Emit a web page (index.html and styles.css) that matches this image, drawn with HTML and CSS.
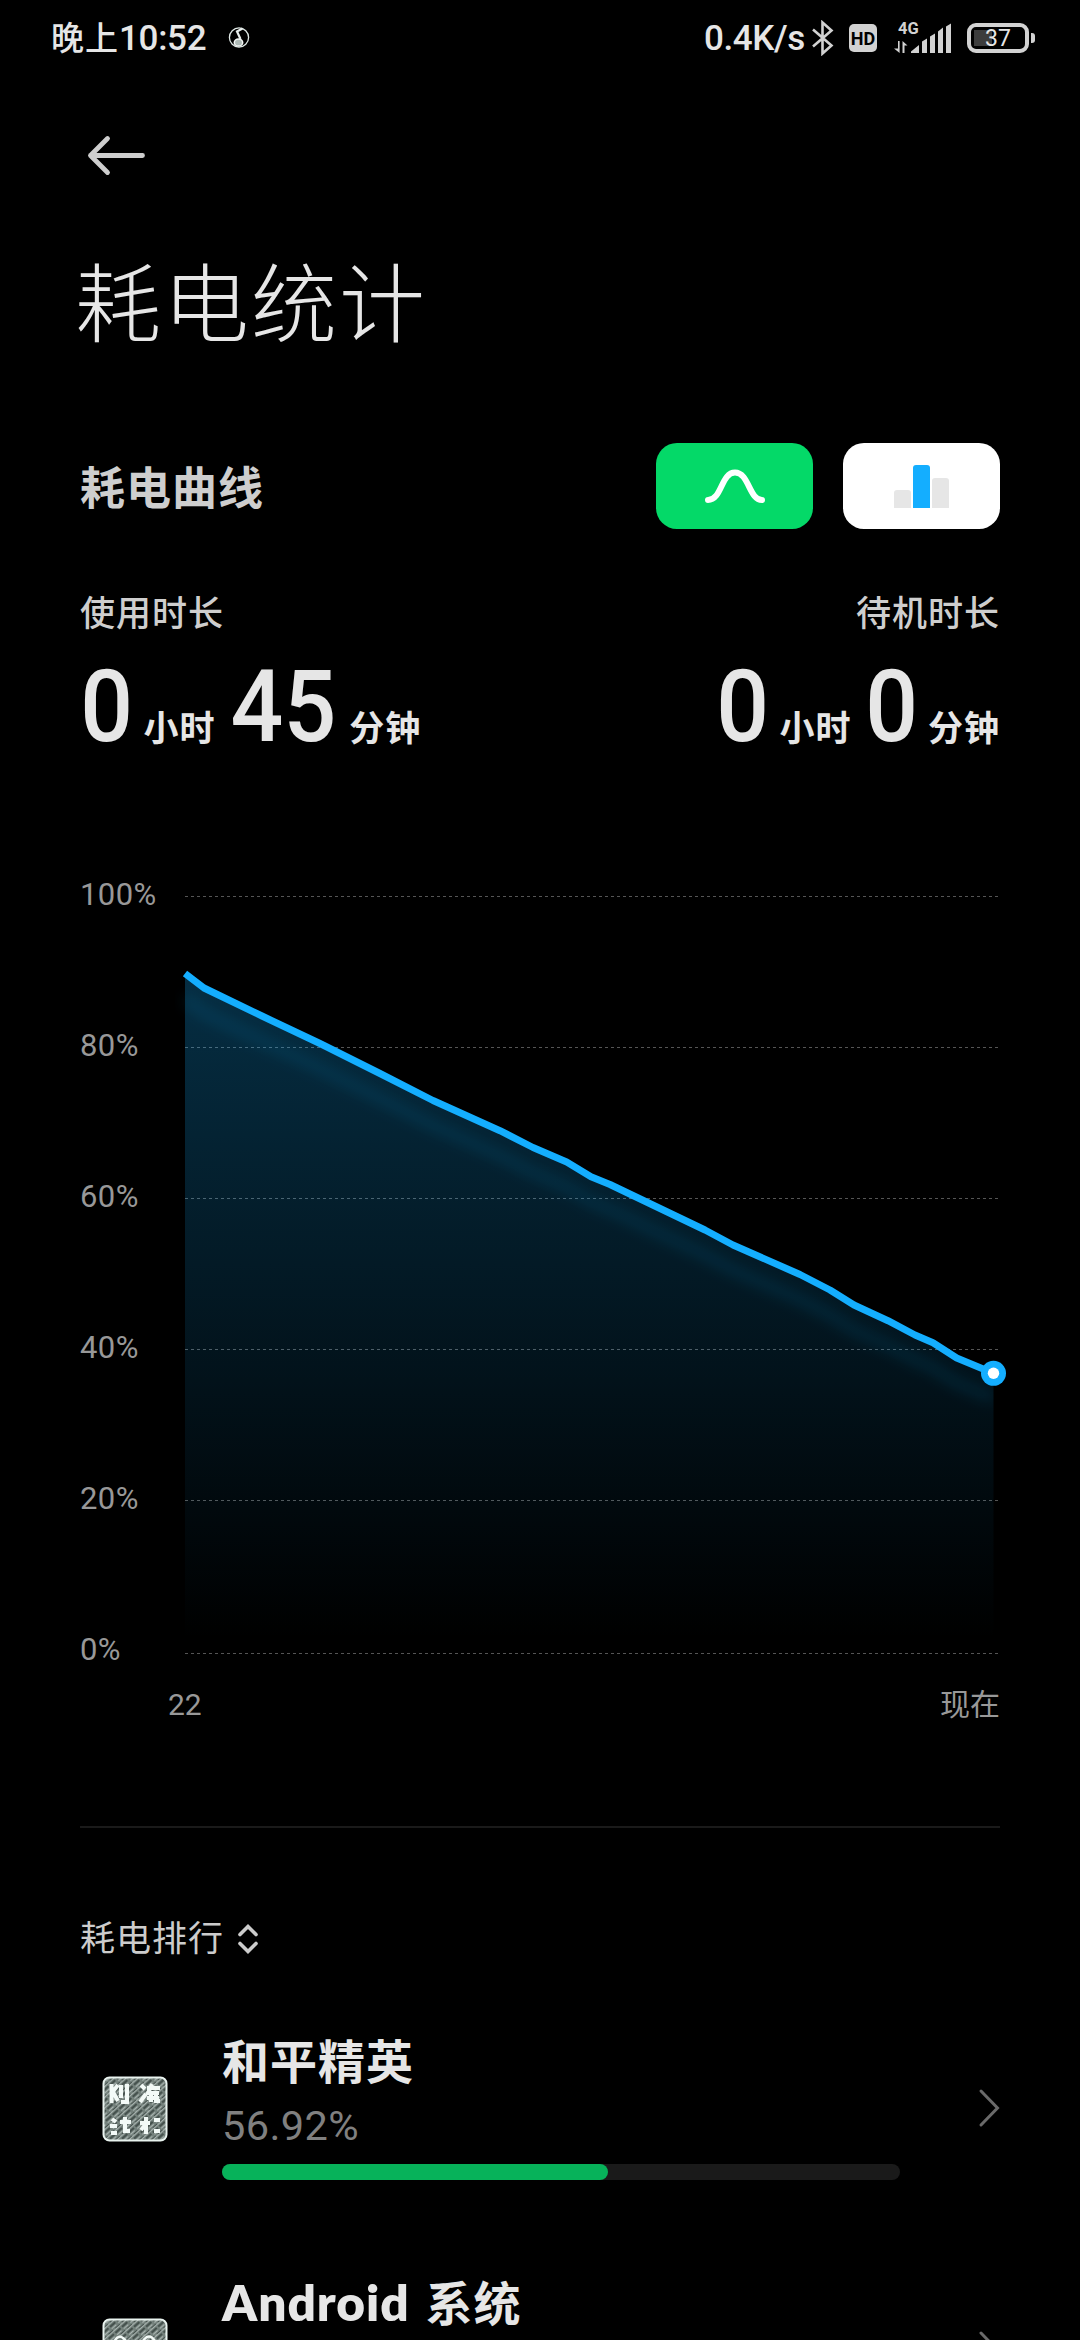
FILE: index.html
```html
<!DOCTYPE html>
<html lang="zh-CN">
<head>
<meta charset="utf-8">
<title>耗电统计</title>
<link rel="stylesheet" href="styles.css">
</head>
<body>
<header class="status">
  <div class="status-left">
    <span class="clock"><span class="clock-cn">晚上</span>10:52</span>
    <svg class="music" width="22" height="24" viewBox="0 0 22 24" fill="none">
      <circle cx="11" cy="11.500" r="9.600" stroke="#dfe8e5" stroke-width="1.300"/>
      <path d="M12.500 13 9 5.500 14.500 2.500" stroke="#e8eeec" stroke-width="2.200"/>
      <ellipse cx="10.500" cy="16.500" rx="4.200" ry="3.600" fill="#aebab6" stroke="#f4f8f6" stroke-width="1.500"/>
    </svg>
  </div>
  <div class="status-right">
    <span class="speed">0.4K/s</span>
    <svg class="bt" width="22" height="36" viewBox="0 0 22 36" fill="none" stroke="#d2d2d2" stroke-width="2.600" stroke-linejoin="miter">
      <path d="M1 9.500 19.500 25.500 10.500 33.500V2.500L19.500 10.500 1 26.500"/>
    </svg>
    <span class="hd">HD</span>
    <svg class="signal" width="58" height="38" viewBox="0 -4 58 38" fill="#d2d2d2">
      <text x="4" y="12.500" class="net">4G</text>
      <path d="M4 20h1.600v12L0 27.500h4zM8.500 32V20l5 4.500h-3V32z"/>
      <path d="M17 32v-1.500l8-6.500v8zM28 32V20.500l5-3V32zM36 32V15.500l5-3V32zM44 32V10.500l5-4V32zM52 32V5.500l5-3V32z"/>
    </svg>
    <span class="battery"><span class="battery-text">37</span></span>
    <span class="nub"></span>
  </div>
</header>

<nav class="appbar">
  <svg width="60" height="42" viewBox="0 0 60 42" fill="none" stroke="#cecece" stroke-width="4.800" stroke-linecap="round" stroke-linejoin="round">
    <path d="M56.500 20.500H4.500M21.500 3.500l-17 17 17 17"/>
  </svg>
</nav>
<h1 class="title">耗电统计</h1>

<main class="content">
  <section class="curve-head">
    <h2>耗电曲线</h2>
    <div class="toggles">
      <button class="toggle toggle-on">
        <svg width="157" height="86" viewBox="0 0 157 86" fill="none" stroke="#fff" stroke-width="6" stroke-linecap="round"><path d="M52 57C66 57 65 29.500 79 29.500S93 57 106 57"/></svg>
      </button>
      <button class="toggle">
        <svg width="157" height="86" viewBox="0 0 157 86"><path fill="#e6e6e6" d="M51 65V50q0-3 3-3h11q3 0 3 3v15zM89 65V38q0-3 3-3h11q3 0 3 3v27z"/><path fill="#14aeff" d="M70 65V25q0-3 3-3h11q3 0 3 3v40z"/></svg>
      </button>
    </div>
  </section>

  <section class="durations">
    <div class="duration">
      <div class="duration-label">使用时长</div>
      <div class="duration-value"><b>0</b><i>小时</i><b>45</b><i>分钟</i></div>
    </div>
    <div class="duration duration-end">
      <div class="duration-label">待机时长</div>
      <div class="duration-value"><b>0</b><i>小时</i><b>0</b><i>分钟</i></div>
    </div>
  </section>

  <section class="chart">
    <div class="y-axis"><span>100%</span><span>80%</span><span>60%</span><span>40%</span><span>20%</span><span>0%</span></div>
    <svg class="plot" width="815" height="800" viewBox="185 872 815 800" fill="none">
      <defs>
        <linearGradient id="area" gradientUnits="userSpaceOnUse" x1="0" y1="973" x2="0" y2="1640">
          <stop offset="0" stop-color="#14aeff" stop-opacity=".265"/>
          <stop offset="1" stop-color="#14aeff" stop-opacity="0"/>
        </linearGradient>
        <filter id="soft" filterUnits="userSpaceOnUse" x="150" y="940" width="900" height="520"><feGaussianBlur stdDeviation="7"/></filter>
        <clipPath id="under"><path d="M175 973.500H185L204 988 262 1016 320 1043.500 379 1073 433 1100.500 500 1130.700 533 1147.500 566.700 1162 591 1176.700 610 1184.500 705 1230 733 1245 800 1274.500 830 1290 854 1305 888 1320.700 915 1335 933 1342.700 956.700 1358 993.500 1373.300V1653H175z"/></clipPath>
      </defs>
      <path stroke="#555" stroke-dasharray="3 3" d="M185 896.500H998.500M185 1047.500H998.500M185 1198.500H998.500M185 1349.500H998.500M185 1500.500H998.500M185 1653.500H998.500"/>
      <path fill="url(#area)" d="M185 973.500 204 988 262 1016 320 1043.500 379 1073 433 1100.500 500 1130.700 533 1147.500 566.700 1162 591 1176.700 610 1184.500 705 1230 733 1245 800 1274.500 830 1290 854 1305 888 1320.700 915 1335 933 1342.700 956.700 1358 993.500 1373.300V1653H185z"/>
      <g clip-path="url(#under)">
        <path filter="url(#soft)" stroke="#14aeff" stroke-opacity=".13" stroke-width="9" transform="translate(0 25)" d="M185 973.500 204 988 262 1016 320 1043.500 379 1073 433 1100.500 500 1130.700 533 1147.500 566.700 1162 591 1176.700 610 1184.500 705 1230 733 1245 800 1274.500 830 1290 854 1305 888 1320.700 915 1335 933 1342.700 956.700 1358 993.500 1373.300"/>
      </g>
      <path stroke="#14aeff" stroke-width="7" stroke-linejoin="round" d="M185 973.500 204 988 262 1016 320 1043.500 379 1073 433 1100.500 500 1130.700 533 1147.500 566.700 1162 591 1176.700 610 1184.500 705 1230 733 1245 800 1274.500 830 1290 854 1305 888 1320.700 915 1335 933 1342.700 956.700 1358 993.500 1373.300"/>
      <circle cx="993.500" cy="1373.300" r="12.500" fill="#14aeff"/>
      <circle cx="993.500" cy="1373.300" r="5.700" fill="#fff"/>
    </svg>
  </section>
  <div class="x-axis"><span>22</span><span>现在</span></div>

  <hr class="divider">

  <div class="rank-head">
    <span>耗电排行</span>
    <svg width="22" height="34" viewBox="0 0 22 34" fill="none" stroke="#ccc" stroke-width="3.600" stroke-linecap="round" stroke-linejoin="miter"><path d="M3 11.500 11 3.500l8 8M3 20.500l8 8 8-8"/></svg>
  </div>

  <ul class="rank">
    <li class="app">
      <svg class="app-icon" width="66" height="66" viewBox="0 0 66 66">
        <defs>
          <pattern id="hatch" width="9" height="8" patternUnits="userSpaceOnUse" patternTransform="rotate(-42)">
            <path fill="#74817c" d="M0 0h9v8H0z"/>
            <path stroke="#a9b4b0" stroke-width="1" d="M0 1.500h9M0 6.500h6"/>
            <path stroke="#35413d" stroke-width="1.300" d="M0 4h7M3 0h6"/>
          </pattern>
        </defs>
        <rect x="1.500" y="1.500" width="63" height="63" rx="6" fill="url(#hatch)" stroke="#e9f3ef" stroke-width="2"/>
        <g fill="none" stroke="#f3faf7" stroke-width="4">
          <path d="M9.500 8v19M9 18l7-9M11 16l5 9M19 9v13M25 8v18h-6"/>
          <path d="M39 9l4 4M38 26l6-8M45 12h13M50 8l-4 9h11M49 17v9M54 17v8h4M45 22h12"/>
          <path d="M10 43l4 3M8 50h7M9 57h6M18 46h11M23 41v14h5"/>
          <path d="M38 47h10M44 41v17M39 54l4-5M52 44h6M52 55h6"/>
        </g>
      </svg>
      <div class="app-body">
        <div class="app-name">和平精英</div>
        <div class="app-pct">56.92%</div>
        <div class="bar"><div class="bar-fill" style="width:57%"></div></div>
      </div>
      <svg class="chevron" width="22" height="40" viewBox="0 0 22 40" fill="none" stroke="#6a6a6a" stroke-width="3" stroke-linecap="round"><path d="M3 3 19.500 20 3 37"/></svg>
    </li>
    <li class="app">
      <svg class="app-icon" width="66" height="66" viewBox="0 0 66 66">
        <rect x="1.500" y="1.500" width="63" height="63" rx="6" fill="url(#hatch)" stroke="#e9f3ef" stroke-width="2"/>
        <path d="M12 24q5-10 12-1M41 23q6-9 12 0" fill="none" stroke="#f3faf7" stroke-width="2.500"/>
      </svg>
      <div class="app-body">
        <div class="app-name"><span class="latin">Android</span> 系统</div>
      </div>
      <svg class="chevron" width="22" height="40" viewBox="0 0 22 40" fill="none" stroke="#6a6a6a" stroke-width="3" stroke-linecap="round"><path d="M3 3 19.500 20 3 37"/></svg>
    </li>
  </ul>
</main>
</body>
</html>
```

FILE: styles.css
```css
* { box-sizing: border-box; margin: 0; padding: 0; }
html, body { width: 1080px; height: 2340px; overflow: hidden; background: #000; }
body { font-family: Roboto, "Noto Sans CJK SC", sans-serif; color: #e6e6e6; }
svg { display: block; flex: none; }

.status { height: 76px; display: flex; justify-content: space-between; padding: 0 45px 0 51px; line-height: 76px; white-space: nowrap; }
.status-left, .status-right { display: flex; align-items: center; }
.clock { width: 157px; margin-right: 20px; padding-top: 1px; font-size: 35px; font-weight: 500; letter-spacing: -.3px; }
.clock-cn { font-size: 33px; letter-spacing: 1px; }
.speed { width: 108px; padding-top: 1px; font-size: 35px; font-weight: 500; letter-spacing: -.4px; }
.bt { margin-right: 15px; }
.hd { width: 28px; height: 28px; margin-right: 17px; border-radius: 5px; background: #d2d2d2; color: #000; font-size: 18px; font-weight: 700; line-height: 29px; text-align: center; }
.signal { margin: -4px 15px 0 0; }
.net { font-size: 16.5px; font-weight: 700; }
.battery { width: 62px; height: 30px; border: 4px solid #d2d2d2; border-radius: 9px; background: linear-gradient(#3c3c3c, #3c3c3c) 3px 3px / 18px 16px no-repeat; font-size: 23px; line-height: 23px; text-align: center; }
.nub { width: 4px; height: 10px; margin-left: 2px; border-radius: 0 3px 3px 0; background: #d2d2d2; }

.appbar { height: 171px; padding: 59px 0 0 86px; }
.title { height: 120px; padding-left: 75px; font-size: 86px; font-weight: 300; line-height: 120px; letter-spacing: 2px; }

.content { padding: 0 80px; }
.curve-head { height: 86px; margin-top: 76px; display: flex; justify-content: space-between; }
.curve-head h2 { padding-top: 4px; font-size: 45px; font-weight: 700; line-height: 86px; letter-spacing: 1px; color: #cecece; }
.toggles { display: flex; gap: 30px; }
.toggle { width: 157px; height: 86px; border: 0; border-radius: 21px; background: #fff; }
.toggle-on { background: #04d968; }

.durations { margin-top: 61px; display: flex; justify-content: space-between; }
.duration-label { font-size: 35px; font-weight: 500; line-height: 50px; letter-spacing: 1px; color: #cecece; }
.duration-value { height: 110px; margin-top: 12px; display: flex; line-height: 110px; align-items: baseline; }
.duration-value b { font-size: 101px; font-weight: 500; transform: translateX(-2px) scaleX(.92); }
.duration-value i { margin: 0 13px 0 6px; font-size: 35px; font-style: normal; font-weight: 700; letter-spacing: 1px; }
.duration-value i:last-child { margin-right: 0; }
.duration-end { text-align: right; }

.chart { height: 800px; margin-top: 110px; display: flex; }
.y-axis { width: 105px; display: flex; flex-direction: column; justify-content: space-between; font-size: 31px; line-height: 45px; letter-spacing: .4px; color: #989898; }
.plot { overflow: visible; }
.x-axis { height: 50px; margin-top: 8px; padding-left: 88px; display: flex; justify-content: space-between; font-size: 30px; line-height: 50px; color: #989898; }
.divider { height: 2px; margin-top: 96px; border: 0; background: #1a1a1a; }

.rank-head { height: 60px; margin-top: 82px; display: flex; align-items: center; gap: 13px; font-size: 35px; line-height: 60px; letter-spacing: 1px; color: #ccc; }
.rank { height: 370px; margin-top: 61px; overflow: hidden; list-style: none; }
.app { height: 242px; padding-left: 22px; display: flex; }
.app-icon { margin-top: 45px; }
.app-body { width: 678px; margin-left: 54px; }
.app-name { height: 64px; font-size: 47px; font-weight: 700; line-height: 64px; letter-spacing: 1px; white-space: nowrap; }
.latin { margin-right: 3px; font-family: Lato, sans-serif; font-size: 49.5px; font-weight: 800; line-height: 0; letter-spacing: 1px; }
.app-pct { font-size: 41.5px; line-height: 50px; margin-top: 6px; letter-spacing: .4px; color: #808080; }
.bar { height: 16px; margin-top: 13px; border-radius: 8px; background: #1a1a1a; }
.bar-fill { height: 16px; border-radius: 8px; background: #07b25a; }
.chevron { margin: 57px 0 0 78px; }
```
